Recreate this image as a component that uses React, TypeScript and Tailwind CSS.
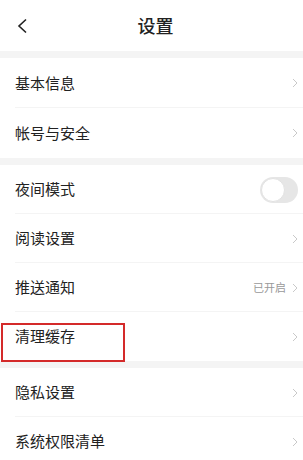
import * as React from "react";

type RowType = {
  label: string;
  value?: string;
  toggle?: boolean;
  marked?: boolean;
};

const sections: { rows: RowType[]; h: string }[] = [
  { h: "h-[50px]", rows: [{ label: "基本信息" }, { label: "帐号与安全" }] },
  {
    h: "h-[49px]",
    rows: [
      { label: "夜间模式", toggle: true },
      { label: "阅读设置" },
      { label: "推送通知", value: "已开启" },
      { label: "清理缓存", marked: true },
    ],
  },
  { h: "h-[49px]", rows: [{ label: "隐私设置" }, { label: "系统权限清单" }] },
];

const Chevron = () => (
  <svg width="6" height="10" viewBox="0 0 6 10" fill="none">
    <path d="M1 1l4 4-4 4" stroke="#c9c9c9" strokeWidth="1" />
  </svg>
);

const Row = ({ row, h, last }: { row: RowType; h: string; last: boolean }) => (
  <div className={`relative flex items-center pl-[15px] pr-[5px] ${h}`}>
    <span className="text-[15px] text-[#222]">{row.label}</span>
    <div className="ml-auto flex items-center gap-[6px]">
      {row.value && <span className="text-[11px] text-[#999]">{row.value}</span>}
      {row.toggle ? (
        <div className="mr-[0px] flex h-[26px] w-[38px] items-center rounded-full bg-[#e6e6e6] p-[1px]">
          <div className="h-[24px] w-[24px] rounded-full border border-[#e2e2e2] bg-white" />
        </div>
      ) : (
        <Chevron />
      )}
    </div>
    {!last && <div className="absolute bottom-0 left-[15px] right-0 h-px bg-[#f4f4f4]" />}
    {row.marked && (
      <div className="absolute left-[1px] top-[11px] h-[39px] w-[124px] border-2 border-[#d42a2a]" />
    )}
  </div>
);

export default function App() {
  return (
    <div
      className="h-[460px] w-[303px] overflow-hidden bg-white"
      style={{ fontFamily: '"Noto Sans CJK SC", "Noto Sans", sans-serif' }}
    >
      <div className="relative flex h-[51px] items-center justify-center pl-[8px]">
        <svg className="absolute left-[16px] top-[18px]" width="12" height="16" viewBox="0 0 12 16" fill="none">
          <path d="M10 1.5L3 8l7 6.5" stroke="#222" strokeWidth="1.6" />
        </svg>
        <span className="text-[18px] font-medium text-[#222]">设置</span>
      </div>
      {sections.map((s, i) => (
        <div key={i}>
          <div className="h-[7px] bg-[#f4f4f4]" />
          {s.rows.map((r, j) => (
            <Row key={j} row={r} h={s.h} last={j === s.rows.length - 1} />
          ))}
        </div>
      ))}
    </div>
  );
}
